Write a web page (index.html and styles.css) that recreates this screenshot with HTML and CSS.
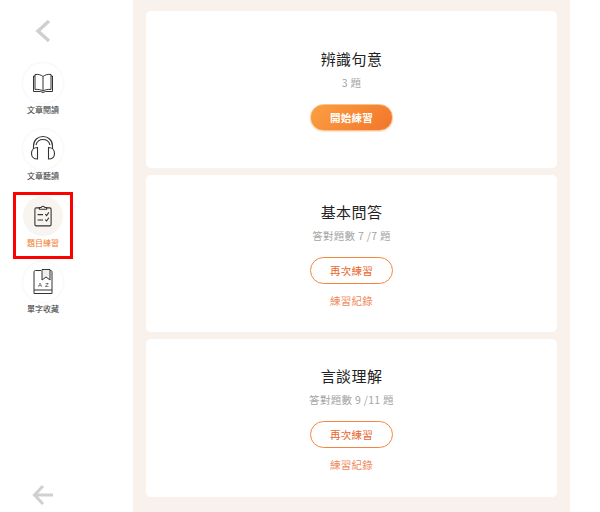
FILE: index.html
```html
<!DOCTYPE html>
<html lang="zh-Hant">
<head>
    <meta charset="UTF-8">
    <title>題目練習</title>
    <link rel="stylesheet" href="styles.css">
</head>
<body>
    <div class="page">
        <nav class="sidebar">
            <div class="back">
                <svg width="16" height="24" viewBox="0 0 16 24"><path d="M14 2 L3 12 L14 22" fill="none" stroke="#cfcfcf" stroke-width="3.4"/></svg>
            </div>
            <div class="nav-list">
                <div class="nav-item">
                    <div class="nav-icon">
                        <svg width="24" height="24" viewBox="0 0 24 24" fill="none" stroke="#333" stroke-width="1">
                            <path d="M12 5.500 C10 3.800 7 3 4 3.500 V18.500 C7 18 10 18.800 12 20 C14 18.800 17 18 20 18.500 V3.500 C17 3 14 3.800 12 5.500 Z"/>
                            <path d="M12 5.500 V20"/>
                            <path d="M4 5 H2.500 V20.500 H9.500 L12 21.500 L14.500 20.500 H21.500 V5 H20"/>
                        </svg>
                    </div>
                    <div class="nav-label">文章閱讀</div>
                </div>
                <div class="nav-item">
                    <div class="nav-icon">
                        <svg width="28" height="28" viewBox="0 0 28 28" fill="none" stroke="#333" stroke-width="1.100">
                            <path d="M4.500 14 V11 C4.500 5 9 1.500 14 1.500 C19 1.500 23.500 5 23.500 11 V14"/>
                            <path d="M7 10 C8 6.500 10.500 4.500 14 4.500 C17.500 4.500 20 6.500 21 10"/>
                            <path d="M8.500 12.500 V24 C5 24 2.500 22 2.500 18.500 C2.500 15 5 12.500 8.500 12.500 Z"/>
                            <path d="M19.500 12.500 V24 C23 24 25.500 22 25.500 18.500 C25.500 15 23 12.500 19.500 12.500 Z"/>
                        </svg>
                    </div>
                    <div class="nav-label">文章聽讀</div>
                </div>
                <div class="nav-item active">
                    <div class="nav-icon">
                        <svg width="18" height="22" viewBox="0 0 20 24" fill="none" stroke="#333" stroke-width="1.200">
                            <path d="M6 3 H2.500 C1.500 3 1 3.500 1 4.500 V21.500 C1 22.500 1.500 23 2.500 23 H17.500 C18.500 23 19 22.500 19 21.500 V4.500 C19 3.500 18.500 3 17.500 3 H14"/>
                            <path d="M6 4.500 V2.500 H8 C8.500 0.800 11.500 0.800 12 2.500 H14 V4.500 Z"/>
                            <path d="M4 10.500 H10 M4 16.500 H10"/>
                            <path d="M12.500 10 L14 11.500 L16.500 8 M12.500 16 L14 17.500 L16.500 14"/>
                        </svg>
                    </div>
                    <div class="nav-label">題目練習</div>
                </div>
                <div class="nav-item">
                    <div class="nav-icon">
                        <svg width="20" height="26" viewBox="0 0 20 26" fill="none" stroke="#333" stroke-width="1">
                            <path d="M8 1.500 H2.500 C1.500 1.500 1 2 1 3 V24.500 H19 V3 C19 2 18.500 1.500 17.500 1.500 H17"/>
                            <path d="M1 21 H19"/>
                            <path d="M9 0.500 H17 V11 L13 8 L9 11 Z" fill="#eee"/>
                            <text x="5" y="18" class="az">A</text>
                            <text x="12" y="18" class="az">Z</text>
                        </svg>
                    </div>
                    <div class="nav-label">單字收藏</div>
                </div>
            </div>
            <div class="exit">
                <svg width="22" height="22" viewBox="0 0 22 22"><path d="M11 2 L2.500 11 L11 20 M3 11 H21" fill="none" stroke="#d0d0d0" stroke-width="3"/></svg>
            </div>
        </nav>

        <main class="content">
            <section class="card first">
                <h2>辨識句意</h2>
                <p class="count">3 題</p>
                <button class="btn btn-start">開始練習</button>
            </section>
            <section class="card">
                <h2>基本問答</h2>
                <p class="count">答對題數 7 /7 題</p>
                <button class="btn btn-again">再次練習</button>
                <a class="record">練習紀錄</a>
            </section>
            <section class="card">
                <h2>言談理解</h2>
                <p class="count">答對題數 9 /11 題</p>
                <button class="btn btn-again">再次練習</button>
                <a class="record">練習紀錄</a>
            </section>
        </main>
    </div>
</body>
</html>
```

FILE: styles.css
```css
* {
    margin: 0;
    padding: 0;
    box-sizing: border-box;
}

body {
    font-family: "Noto Sans CJK TC", "Liberation Sans", sans-serif;
    background: #fff;
    overflow: hidden;
}

.page {
    display: flex;
    width: 600px;
    height: 512px;
}

.sidebar {
    width: 133px;
    height: 512px;
    padding-top: 19px;
    padding-right: 47px;
    display: flex;
    flex-direction: column;
    align-items: center;
}

.back {
    height: 24px;
    margin-bottom: 19px;
}

.nav-list {
    display: flex;
    flex-direction: column;
    gap: 5.330px;
}

.nav-item {
    width: 54px;
    height: 61px;
    padding-top: 1px;
    display: flex;
    flex-direction: column;
    align-items: center;
}

.nav-icon {
    width: 40px;
    height: 40px;
    border-radius: 50%;
    background: #fff;
    box-shadow: 0 0 3px rgba(0, 0, 0, 0.08);
    display: flex;
    justify-content: center;
    align-items: center;
    flex-shrink: 0;
}

.nav-label {
    font-size: 8px;
    line-height: 14px;
    color: #333;
    white-space: nowrap;
}

.nav-item.active {
    outline: 3px solid #ff0000;
}

.nav-item.active .nav-icon {
    background: #f8f5f0;
    box-shadow: none;
}

.nav-item.active .nav-label {
    color: #f07a2c;
}

.az {
    font-family: "Liberation Sans", sans-serif;
    font-size: 6px;
    fill: #333;
    stroke: none;
}

.exit {
    margin-top: auto;
    margin-bottom: 6px;
    height: 22px;
}

.content {
    width: 437px;
    height: 512px;
    background: #f9f1eb;
    padding: 11px 13px 0;
    display: flex;
    flex-direction: column;
    gap: 6.900px;
}

.card {
    height: 157.300px;
    background: #fff;
    border-radius: 5px;
    display: flex;
    flex-direction: column;
    align-items: center;
    padding-top: 26px;
}

.card.first {
    padding-top: 37px;
}

h2 {
    font-size: 15px;
    font-weight: 400;
    line-height: 22px;
    letter-spacing: 0.4px;
    color: #222;
}

.count {
    margin-top: 5px;
    font-size: 10.500px;
    line-height: 16px;
    letter-spacing: 0.3px;
    color: #a5a5a5;
}

.btn {
    width: 83px;
    height: 27px;
    margin-top: 13px;
    border-radius: 14px;
    font-family: inherit;
    font-size: 10.500px;
    letter-spacing: 0.3px;
}

.btn-start {
    background: linear-gradient(135deg, #fba042 0%, #f2752a 100%);
    border: 1px solid #fbc08c;
    color: #fff;
    font-weight: 700;
    box-shadow: 0 1px 1px rgba(240, 120, 40, 0.2);
}

.btn-again {
    background: #fff;
    border: 1px solid #f5863f;
    color: #e8632a;
}

.record {
    margin-top: 9px;
    font-size: 10.500px;
    line-height: 16px;
    letter-spacing: 0.3px;
    color: #f0885a;
}
```
